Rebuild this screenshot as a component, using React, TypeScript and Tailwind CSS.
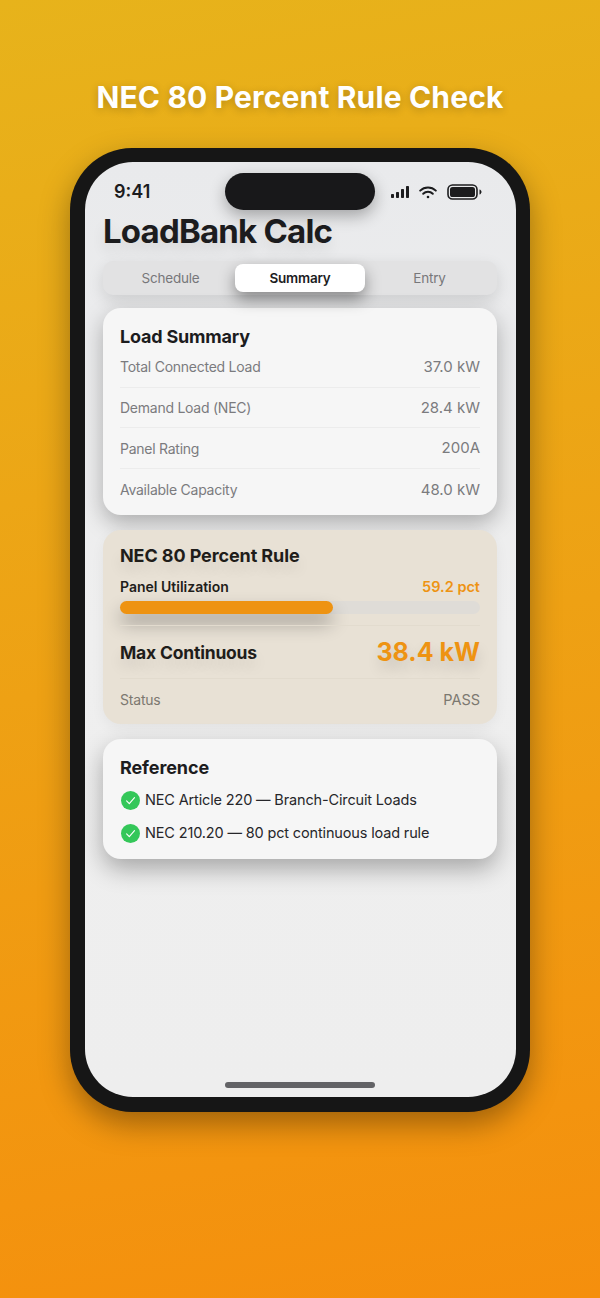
const FONT = "font-['Inter','Liberation_Sans',sans-serif]";

const loadRows = [
  { label: 'Total Connected Load', value: '37.0 kW' },
  { label: 'Demand Load (NEC)', value: '28.4 kW' },
  { label: 'Panel Rating', value: '200A' },
  { label: 'Available Capacity', value: '48.0 kW' },
];

const references = ['NEC Article 220 — Branch-Circuit Loads', 'NEC 210.20 — 80 pct continuous load rule'];

function StatusIcons() {
  return (
    <div className="flex items-center gap-[10px]">
      <svg width="18" height="12" viewBox="0 0 18 12" fill="#1c1c1e">
        <rect x="0" y="8" width="3" height="4" rx="0.8" />
        <rect x="5" y="6" width="3" height="6" rx="0.8" />
        <rect x="10" y="3" width="3" height="9" rx="0.8" />
        <rect x="15" y="0" width="3" height="12" rx="0.8" />
      </svg>
      <svg width="18" height="13" viewBox="0 0 18 13" fill="none" stroke="#1c1c1e" strokeWidth="2" strokeLinecap="round">
        <path d="M1.2 4.6a11.2 11.2 0 0 1 15.6 0" />
        <path d="M4.2 7.8a6.8 6.8 0 0 1 9.6 0" />
        <circle cx="9" cy="11" r="1.3" fill="#1c1c1e" stroke="none" />
      </svg>
      <svg width="35" height="16" viewBox="0 0 35 16" fill="none">
        <rect x="1" y="1" width="29" height="14" rx="4.5" stroke="#1c1c1e" strokeWidth="1.6" />
        <rect x="3" y="3" width="25" height="10" rx="2.6" fill="#1c1c1e" />
        <path d="M32.5 5.5c1.2.3 2 1.3 2 2.5s-.8 2.2-2 2.5z" fill="#1c1c1e" />
      </svg>
    </div>
  );
}

function CheckBadge() {
  return (
    <svg width="19" height="19" viewBox="0 0 19 19" className="shrink-0">
      <circle cx="9.5" cy="9.5" r="9.5" fill="#34c759" />
      <path d="M5.6 9.8l2.7 2.8 5.2-6" fill="none" stroke="#fff" strokeWidth="1.1" strokeLinecap="round" strokeLinejoin="round" />
    </svg>
  );
}

function SegmentedControl() {
  return (
    <div className="mt-[9px] mr-[19px] ml-[18px] flex h-[34px] items-center rounded-[10px] bg-[#e2e2e3] px-[3px] text-[13.5px] tracking-[-0.2px] shadow-[0_6px_16px_rgba(0,0,0,0.12)]">
      <div className="flex-1 text-center text-[#77777a]">Schedule</div>
      <div className="flex h-[28px] w-[130px] items-center justify-center rounded-[8px] bg-white font-semibold text-[#1c1c1e] shadow-[0_7px_16px_rgba(0,0,0,0.4)]">
        Summary
      </div>
      <div className="flex-1 text-center text-[#77777a]">Entry</div>
    </div>
  );
}

function LoadSummaryCard() {
  return (
    <div className="mt-[13px] mr-[19px] ml-[18px] h-[207px] rounded-[18px] bg-[#f6f6f6] px-[17px] pt-[19px] shadow-[0_8px_22px_rgba(0,0,0,0.28)]">
      <h2 className="text-[18px] leading-[20px] font-bold tracking-[-0.2px] text-[#1c1c1e]">Load Summary</h2>
      <div>
        {loadRows.map((row, i) => (
          <div
            key={row.label}
            className={`flex h-[40.7px] items-center justify-between text-[#7b7b7e] ${
              i < loadRows.length - 1 ? 'border-b border-[#ececec]' : ''
            }`}
          >
            <span className="text-[14px] tracking-[-0.25px]">{row.label}</span>
            <span className="pt-[1px] text-[15px]">{row.value}</span>
          </div>
        ))}
      </div>
    </div>
  );
}

function RuleCard() {
  return (
    <div className="mt-[15px] mr-[19px] ml-[18px] h-[194px] rounded-[18px] bg-[#e8e1d5] px-[17px] pt-[14px] shadow-[0_4px_14px_rgba(0,0,0,0.05)]">
      <h2 className="text-[18px] leading-[24px] font-bold tracking-[-0.1px] text-[#1f1d1a] [text-shadow:0_8px_14px_rgba(0,0,0,0.1)]">NEC 80 Percent Rule</h2>
      <div className="mt-[10px] flex items-center justify-between leading-[18px] font-semibold">
        <span className="text-[14px] text-[#1f1d1a]">Panel Utilization</span>
        <span className="text-[14.5px] text-[#ee9312]">59.2 pct</span>
      </div>
      <div className="mt-[5px] h-[13px] rounded-full bg-[#dfdcd7]">
        <div className="h-full rounded-full bg-[#ee9312] shadow-[0_10px_18px_rgba(0,0,0,0.3)]" style={{ width: '59.2%' }} />
      </div>
      <div className="mt-[11px] flex h-[54px] items-center justify-between border-y border-[#e2dbce] pt-[2px]">
        <span className="text-[17.5px] font-bold tracking-[-0.2px] text-[#1f1d1a] [text-shadow:0_8px_14px_rgba(0,0,0,0.1)]">Max Continuous</span>
        <span className="text-[25px] font-bold text-[#ee9312] [text-shadow:0_8px_14px_rgba(0,0,0,0.14)]">38.4 kW</span>
      </div>
      <div className="mt-[11px] flex items-center justify-between leading-[20px] text-[#7c7870]">
        <span className="text-[14px] tracking-[-0.2px]">Status</span>
        <span className="text-[14.5px]">PASS</span>
      </div>
    </div>
  );
}

function ReferenceCard() {
  return (
    <div className="mt-[15px] mr-[19px] ml-[18px] h-[120px] rounded-[18px] bg-[#f6f6f6] px-[17px] pt-[17px] shadow-[0_10px_24px_rgba(0,0,0,0.3)]">
      <h2 className="text-[18px] leading-[24px] font-bold tracking-[-0.1px] text-[#1c1c1e]">Reference</h2>
      <div className="mt-[10px] flex flex-col gap-[13px]">
        {references.map((text) => (
          <div key={text} className="flex h-[20px] items-center gap-[5px] pl-[1px] text-[14.5px] tracking-[-0.15px] text-[#26262a]">
            <CheckBadge />
            <span>{text}</span>
          </div>
        ))}
      </div>
    </div>
  );
}

export default function App() {
  return (
    <div className={`${FONT} flex h-[1298px] w-[600px] flex-col items-center overflow-hidden bg-[linear-gradient(170deg,#e7b31b,#f58f0d)] pt-[78px]`}>
      <h1 className="text-[30px] leading-[38px] font-bold tracking-[0.15px] text-white [text-shadow:0_2px_8px_rgba(0,0,0,0.22)]">NEC 80 Percent Rule Check</h1>

      <div className="mt-[32px] h-[964px] w-[460px] rounded-[62px] bg-[#161616] pt-[14px] pl-[15px] shadow-[0_12px_30px_rgba(0,0,0,0.35)]">
        <div className="relative h-[935px] w-[431px] overflow-hidden rounded-[48px] bg-gradient-to-b from-[#e9eaec] via-[#efefef] to-[#eeeeee]">
          {/* Dynamic island */}
          <div className="absolute top-[11px] left-[140px] h-[37px] w-[150px] rounded-[19px] bg-[#18181a] shadow-[0_6px_16px_rgba(0,0,0,0.3)]" />

          <div className="flex items-center justify-between pt-[19px] pr-[34px] pl-[29px]">
            <span className="text-[18px] leading-[22px] font-semibold text-[#1c1c1e]">9:41</span>
            <StatusIcons />
          </div>

          <div className="mt-[7px] pl-[18px] text-[33px] leading-[42px] font-bold tracking-[-0.8px] text-[#1c1c1e] [text-shadow:0_8px_14px_rgba(0,0,0,0.1)]">
            LoadBank Calc
          </div>

          <SegmentedControl />
          <LoadSummaryCard />
          <RuleCard />
          <ReferenceCard />

          {/* Home indicator */}
          <div className="absolute bottom-[9px] left-[140px] h-[6px] w-[150px] rounded-full bg-[#636366]" />
        </div>
      </div>
    </div>
  );
}
